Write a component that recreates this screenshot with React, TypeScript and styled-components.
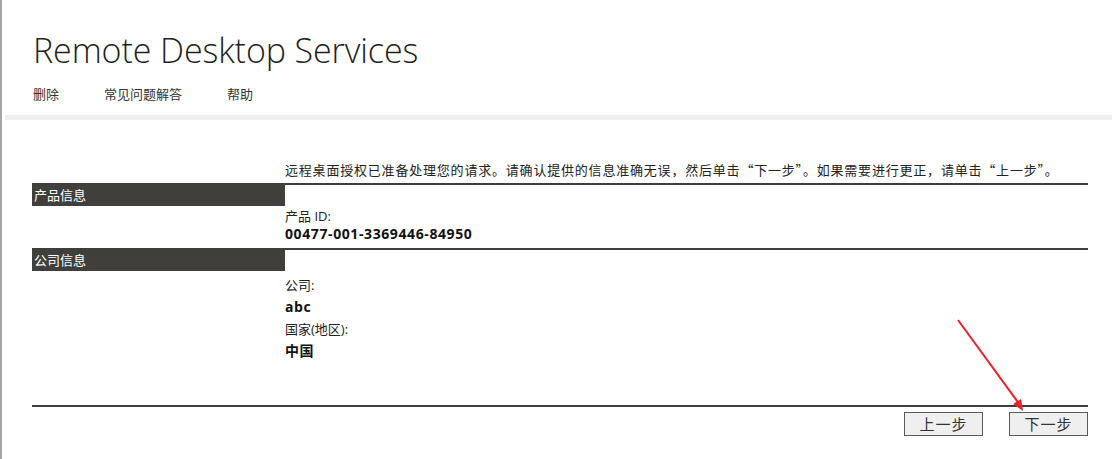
import styled, { createGlobalStyle } from "styled-components";

const GlobalStyle = createGlobalStyle`
  html, body {
    margin: 0;
    padding: 0;
    background: #ffffff;
  }
  body {
    font-family: "Open Sans", "Noto Sans CJK SC", sans-serif;
    color: #222;
  }
`;

const Page = styled.div`
  position: relative;
  width: 1112px;
  height: 459px;
  box-sizing: border-box;
  border-left: 2px solid #a6a6a6;
  overflow: hidden;
`;

const Header = styled.header`
  padding: 28px 0 0 31px;
`;

const Title = styled.h1`
  margin: 0;
  font-family: "Open Sans", sans-serif;
  font-weight: 300;
  font-size: 34px;
  line-height: 44px;
  color: #1f1f1f;
  letter-spacing: -0.1px;
`;

const Nav = styled.nav`
  display: flex;
  gap: 45px;
  margin-top: 12px;
  height: 20px;
`;

const NavLink = styled.a`
  font-family: "Noto Sans CJK SC", sans-serif;
  font-size: 13px;
  line-height: 20px;
  color: #333;
  text-decoration: none;
  cursor: pointer;
`;

const Divider = styled.div`
  margin: 11px 0 0 3px;
  height: 5px;
  background: #eeeeee;
`;

const Content = styled.main`
  margin-left: 30px;
  width: 1056px;
`;

const Row = styled.div`
  display: grid;
  grid-template-columns: 253px 1fr;
`;

const Intro = styled.p`
  grid-column: 2;
  margin: 41px 0 4px;
  font-family: "Noto Sans CJK SC", sans-serif;
  font-size: 13px;
  line-height: 18px;
  color: #222;
  white-space: nowrap;
  letter-spacing: 0.8px;
`;

const SectionHead = styled.div<{ $gap?: number }>`
  display: grid;
  grid-template-columns: 253px 1fr;
  margin-top: ${(p) => p.$gap ?? 0}px;
  border-top: 2px solid #3e3e3c;
`;

const SectionLabel = styled.div`
  height: 21px;
  background: #403f3c;
  color: #ffffff;
  font-family: "Noto Sans CJK SC", sans-serif;
  font-size: 13px;
  line-height: 19px;
  padding-left: 2px;
`;

const SectionBody = styled.div<{ $pad: number }>`
  grid-column: 2;
  padding-top: ${(p) => p.$pad}px;
`;

const FieldLabel = styled.div<{ $line: number }>`
  font-family: "Open Sans", "Noto Sans CJK SC", sans-serif;
  font-size: 13px;
  line-height: ${(p) => p.$line}px;
  color: #222;
`;

const FieldValue = styled.div<{ $line: number }>`
  font-family: "Open Sans", "Noto Sans CJK SC", sans-serif;
  font-weight: 700;
  font-size: 14px;
  letter-spacing: 0.6px;
  line-height: ${(p) => p.$line}px;
  color: #111;
`;

const Footer = styled.div`
  margin-top: 43px;
  border-top: 2px solid #3e3e3c;
  display: flex;
  justify-content: flex-end;
  gap: 26px;
  padding-top: 5px;
`;

const StepButton = styled.button`
  width: 79px;
  height: 24px;
  padding: 0;
  border: 1px solid #5a5a5a;
  background: #efefef;
  font-family: "Noto Sans CJK SC", sans-serif;
  font-size: 15px;
  line-height: 22px;
  color: #333;
  letter-spacing: 1px;
  cursor: pointer;
`;

const Annotation = styled.svg`
  position: absolute;
  left: 0;
  top: 0;
  pointer-events: none;
`;

export default function App() {
  return (
    <>
      <GlobalStyle />
      <Page>
        <Header>
          <Title>Remote Desktop Services</Title>
          <Nav>
            <NavLink>删除</NavLink>
            <NavLink>常见问题解答</NavLink>
            <NavLink>帮助</NavLink>
          </Nav>
        </Header>
        <Divider />
        <Content>
          <Row>
            <Intro>
              远程桌面授权已准备处理您的请求。请确认提供的信息准确无误，然后单击“下一步”。如果需要进行更正，请单击“上一步”。
            </Intro>
          </Row>

          <SectionHead>
            <SectionLabel>产品信息</SectionLabel>
          </SectionHead>
          <Row>
            <SectionBody $pad={1}>
              <FieldLabel $line={18}>产品 ID:</FieldLabel>
              <FieldValue $line={18}>00477-001-3369446-84950</FieldValue>
            </SectionBody>
          </Row>

          <SectionHead $gap={5}>
            <SectionLabel>公司信息</SectionLabel>
          </SectionHead>
          <Row>
            <SectionBody $pad={3}>
              <FieldLabel $line={22}>公司:</FieldLabel>
              <FieldValue $line={22}>abc</FieldValue>
              <FieldLabel $line={22}>国家(地区):</FieldLabel>
              <FieldValue $line={22}>中国</FieldValue>
            </SectionBody>
          </Row>

          <Footer>
            <StepButton>上一步</StepButton>
            <StepButton>下一步</StepButton>
          </Footer>
        </Content>

        <Annotation width="1112" height="459" viewBox="0 0 1112 459">
          <line x1="956" y1="320" x2="1018" y2="405" stroke="#e8212b" strokeWidth="2" />
          <polygon points="1021,411 1011,404 1019,399" fill="#e8212b" />
        </Annotation>
      </Page>
    </>
  );
}
